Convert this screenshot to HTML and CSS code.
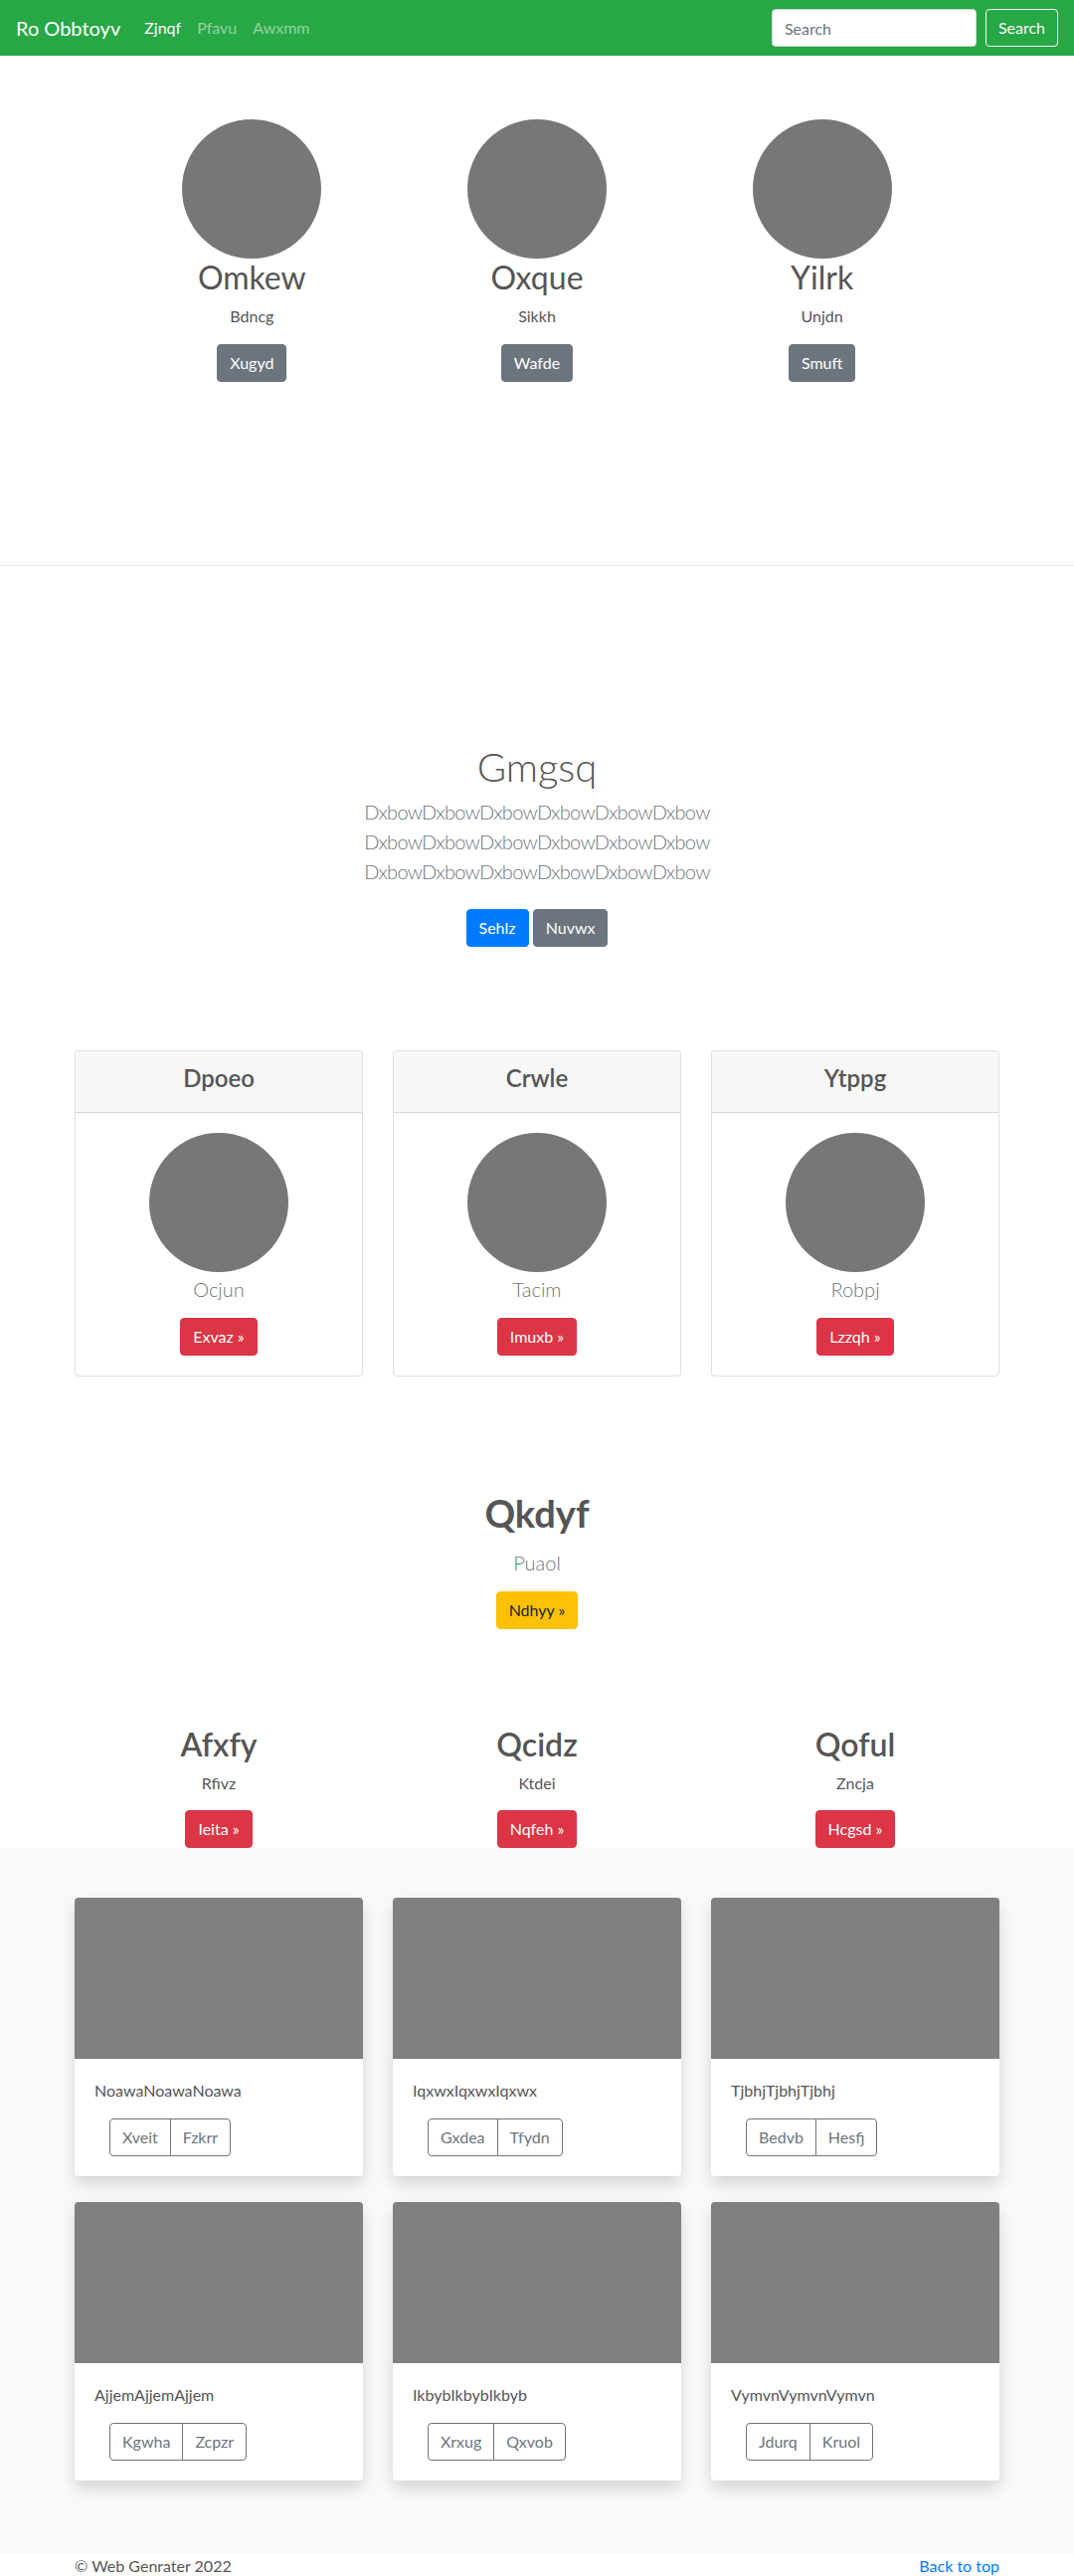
FILE: index.html
```html
<!DOCTYPE html>
<html lang="en">
<head>
<meta charset="utf-8">
<title>Ro Obbtoyv</title>
<link rel="stylesheet" href="styles.css">
</head>
<body>
<nav class="navbar">
  <a class="brand" href="#">Ro Obbtoyv</a>
  <ul class="nav-links">
    <li><a class="nav-link active" href="#">Zjnqf</a></li>
    <li><a class="nav-link" href="#">Pfavu</a></li>
    <li><a class="nav-link" href="#">Awxmm</a></li>
  </ul>
  <form class="search">
    <input class="search-input" type="text" placeholder="Search">
    <button class="btn btn-outline-light" type="button">Search</button>
  </form>
</nav>

<main>
  <section class="team">
    <div class="team-col">
      <div class="circle"></div>
      <h2 class="team-name">Omkew</h2>
      <p class="team-role">Bdncg</p>
      <p class="team-action"><a class="btn btn-secondary" href="#">Xugyd</a></p>
    </div>
    <div class="team-col">
      <div class="circle"></div>
      <h2 class="team-name">Oxque</h2>
      <p class="team-role">Sikkh</p>
      <p class="team-action"><a class="btn btn-secondary" href="#">Wafde</a></p>
    </div>
    <div class="team-col">
      <div class="circle"></div>
      <h2 class="team-name">Yilrk</h2>
      <p class="team-role">Unjdn</p>
      <p class="team-action"><a class="btn btn-secondary" href="#">Smuft</a></p>
    </div>
  </section>

  <hr class="divider">

  <section class="hero">
    <h1 class="hero-title">Gmgsq</h1>
    <p class="lead hero-lead">DxbowDxbowDxbowDxbowDxbowDxbow DxbowDxbowDxbowDxbowDxbowDxbow DxbowDxbowDxbowDxbowDxbowDxbow</p>
    <p class="hero-actions"><a class="btn btn-primary" href="#">Sehlz</a> <a class="btn btn-secondary" href="#">Nuvwx</a></p>
  </section>

  <section class="pricing">
    <div class="card">
      <div class="card-header"><h4 class="card-title">Dpoeo</h4></div>
      <div class="card-body center">
        <div class="circle"></div>
        <p class="lead card-lead">Ocjun</p>
        <a class="btn btn-danger" href="#">Exvaz »</a>
      </div>
    </div>
    <div class="card">
      <div class="card-header"><h4 class="card-title">Crwle</h4></div>
      <div class="card-body center">
        <div class="circle"></div>
        <p class="lead card-lead">Tacim</p>
        <a class="btn btn-danger" href="#">Imuxb »</a>
      </div>
    </div>
    <div class="card">
      <div class="card-header"><h4 class="card-title">Ytppg</h4></div>
      <div class="card-body center">
        <div class="circle"></div>
        <p class="lead card-lead">Robpj</p>
        <a class="btn btn-danger" href="#">Lzzqh »</a>
      </div>
    </div>
  </section>

  <section class="feature">
    <h2 class="feature-title">Qkdyf</h2>
    <p class="lead feature-lead">Puaol</p>
    <a class="btn btn-warning" href="#">Ndhyy »</a>
  </section>

  <section class="trio">
    <div class="trio-col">
      <h2 class="trio-title">Afxfy</h2>
      <p class="trio-text">Rfivz</p>
      <a class="btn btn-danger" href="#">Ieita »</a>
    </div>
    <div class="trio-col">
      <h2 class="trio-title">Qcidz</h2>
      <p class="trio-text">Ktdei</p>
      <a class="btn btn-danger" href="#">Nqfeh »</a>
    </div>
    <div class="trio-col">
      <h2 class="trio-title">Qoful</h2>
      <p class="trio-text">Zncja</p>
      <a class="btn btn-danger" href="#">Hcgsd »</a>
    </div>
  </section>

  <section class="album">
    <div class="album-grid">
      <div class="album-card">
        <div class="thumb"></div>
        <div class="album-body">
          <p class="album-text">NoawaNoawaNoawa</p>
          <div class="btn-group"><a class="btn btn-outline-secondary" href="#">Xveit</a><a class="btn btn-outline-secondary" href="#">Fzkrr</a></div>
        </div>
      </div>
      <div class="album-card">
        <div class="thumb"></div>
        <div class="album-body">
          <p class="album-text">IqxwxIqxwxIqxwx</p>
          <div class="btn-group"><a class="btn btn-outline-secondary" href="#">Gxdea</a><a class="btn btn-outline-secondary" href="#">Tfydn</a></div>
        </div>
      </div>
      <div class="album-card">
        <div class="thumb"></div>
        <div class="album-body">
          <p class="album-text">TjbhjTjbhjTjbhj</p>
          <div class="btn-group"><a class="btn btn-outline-secondary" href="#">Bedvb</a><a class="btn btn-outline-secondary" href="#">Hesfj</a></div>
        </div>
      </div>
      <div class="album-card">
        <div class="thumb"></div>
        <div class="album-body">
          <p class="album-text">AjjemAjjemAjjem</p>
          <div class="btn-group"><a class="btn btn-outline-secondary" href="#">Kgwha</a><a class="btn btn-outline-secondary" href="#">Zcpzr</a></div>
        </div>
      </div>
      <div class="album-card">
        <div class="thumb"></div>
        <div class="album-body">
          <p class="album-text">IkbybIkbybIkbyb</p>
          <div class="btn-group"><a class="btn btn-outline-secondary" href="#">Xrxug</a><a class="btn btn-outline-secondary" href="#">Qxvob</a></div>
        </div>
      </div>
      <div class="album-card">
        <div class="thumb"></div>
        <div class="album-body">
          <p class="album-text">VymvnVymvnVymvn</p>
          <div class="btn-group"><a class="btn btn-outline-secondary" href="#">Jdurq</a><a class="btn btn-outline-secondary" href="#">Kruol</a></div>
        </div>
      </div>
    </div>
  </section>
</main>

<footer class="footer">
  <p class="copyright">© Web Genrater 2022</p>
  <a class="back-top" href="#">Back to top</a>
</footer>
</body>
</html>
```

FILE: styles.css
```css
* { box-sizing: border-box; }

html, body {
  margin: 0;
  padding: 0;
}

body {
  font-family: Lato, "Open Sans", "Liberation Sans", sans-serif;
  font-size: 16px;
  line-height: 1.5;
  color: #555;
  background: #fff;
}

a { text-decoration: none; }

p { margin: 0; }
h1, h2, h4 { margin: 0; }

/* Navbar */
.navbar {
  height: 56px;
  background: #28a745;
  display: flex;
  align-items: center;
  padding: 0 16px;
}

.brand {
  font-size: 20px;
  line-height: 30px;
  color: #fff;
  margin-right: 16px;
}

.nav-links {
  list-style: none;
  margin: 0;
  padding: 0;
  display: flex;
  flex: 1;
}

.nav-link {
  display: block;
  padding: 8px;
  color: rgba(255, 255, 255, 0.5);
}

.nav-link.active { color: #fff; }

.search {
  display: flex;
  align-items: center;
  margin: 0;
}

.search-input {
  width: 206px;
  height: 38px;
  padding: 6px 12px;
  font-family: inherit;
  font-size: 16px;
  color: #495057;
  background: #fff;
  border: 1px solid #ced4da;
  border-radius: 4px;
  margin-right: 9px;
}

.search-input::placeholder { color: #6c757d; }

/* Buttons */
.btn {
  display: inline-block;
  font-family: inherit;
  font-size: 16px;
  line-height: 24px;
  padding: 6px 12px;
  border: 1px solid transparent;
  border-radius: 4px;
  text-align: center;
  cursor: pointer;
}

.btn-outline-light { color: #f8f9fa; border-color: #f8f9fa; background: transparent; }
.btn-secondary { color: #fff; background: #6c757d; border-color: #6c757d; }
.btn-primary { color: #fff; background: #007bff; border-color: #007bff; }
.btn-danger { color: #fff; background: #dc3545; border-color: #dc3545; }
.btn-warning { color: #212529; background: #ffc107; border-color: #ffc107; }
.btn-outline-secondary { color: #6c757d; border-color: #6c757d; background: transparent; }

.circle {
  width: 140px;
  height: 140px;
  border-radius: 50%;
  background: #777;
  margin: 0 auto;
}

.lead {
  font-size: 20px;
  line-height: 30px;
  font-weight: 300;
  color: #6c757d;
}

/* Team */
.team {
  display: grid;
  grid-template-columns: repeat(3, 1fr);
  width: 860px;
  margin: 0 auto;
  padding: 64px 0 184px;
  text-align: center;
}

.team-name {
  font-size: 32px;
  line-height: 38px;
  font-weight: 400;
  margin-bottom: 8px;
}

.team-role { margin-bottom: 16px; }

.divider {
  margin: 0;
  border: 0;
  border-top: 1px solid rgba(0, 0, 0, 0.1);
}

/* Hero */
.hero {
  text-align: center;
  padding: 178px 0 104px;
}

.hero-title {
  font-size: 40px;
  line-height: 48px;
  font-weight: 300;
  margin-bottom: 6px;
}

.hero-lead {
  width: 420px;
  margin: 0 auto 23px;
  letter-spacing: -0.7px;
}

/* Pricing */
.pricing {
  width: 930px;
  margin: 0 auto;
  display: grid;
  grid-template-columns: repeat(3, 1fr);
  column-gap: 30px;
}

.card {
  border: 1px solid rgba(0, 0, 0, 0.125);
  border-radius: 4px;
  background: #fff;
  overflow: hidden;
}

.card-header {
  background: #f7f7f7;
  border-bottom: 1px solid rgba(0, 0, 0, 0.125);
  padding: 12px 20px;
  text-align: center;
}

.card-title {
  font-size: 24px;
  line-height: 29px;
  font-weight: 600;
  margin-bottom: 8px;
}

.card-body {
  padding: 20px;
}

.center { text-align: center; }

.card-lead {
  margin: 2px 0 14px;
}

/* Feature */
.feature {
  text-align: center;
  padding-top: 117px;
}

.feature-title {
  font-size: 38px;
  line-height: 40px;
  font-weight: 700;
  margin-bottom: 15px;
}

.feature-lead { margin-bottom: 14px; }

/* Trio */
.trio {
  width: 930px;
  margin: 0 auto;
  display: grid;
  grid-template-columns: repeat(3, 1fr);
  column-gap: 30px;
  padding-top: 97px;
  text-align: center;
}

.trio-title {
  font-size: 32px;
  line-height: 38px;
  font-weight: 600;
  margin-bottom: 8px;
}

.trio-text { margin-bottom: 15px; }

/* Album */
.album {
  background: #f8f9fa;
  padding: 50px 0 73px;
}

.album-grid {
  width: 930px;
  margin: 0 auto;
  display: grid;
  grid-template-columns: repeat(3, 1fr);
  column-gap: 30px;
  row-gap: 26px;
}

.album-card {
  background: #fff;
  border-radius: 4px;
  overflow: hidden;
  box-shadow: 0 8px 16px rgba(0, 0, 0, 0.15);
}

.thumb {
  height: 162px;
  background: #808080;
}

.album-body {
  padding: 20px;
}

.album-text {
  margin-bottom: 16px;
}

.btn-group {
  display: inline-flex;
  margin-left: 15px;
}

.btn-group .btn:first-child {
  border-top-right-radius: 0;
  border-bottom-right-radius: 0;
}

.btn-group .btn + .btn {
  margin-left: -1px;
  border-top-left-radius: 0;
  border-bottom-left-radius: 0;
}

/* Footer */
.footer {
  width: 930px;
  margin: 0 auto;
  display: flex;
  justify-content: space-between;
  padding-top: 1px;
}

.copyright { color: #555; }
.back-top { color: #007bff; }
```
